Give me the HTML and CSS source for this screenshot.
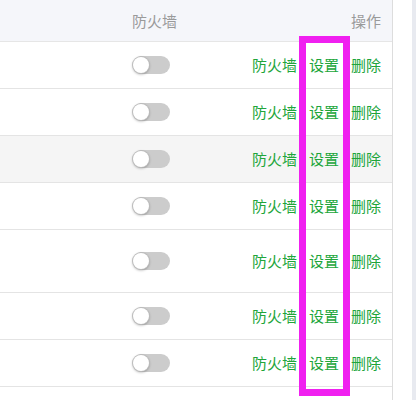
FILE: index.html
```html
<!DOCTYPE html>
<html lang="zh-CN">
<head>
    <meta charset="UTF-8">
    <meta name="viewport" content="width=device-width, initial-scale=1.0">
    <title>站点列表</title>
    <link rel="stylesheet" href="styles.css">
</head>
<body>
    <div class="page">
        <div class="table-box">
            <table class="site-table">
                <thead>
                    <tr>
                        <th class="col-name"></th>
                        <th class="col-fw">防火墙</th>
                        <th class="col-op">操作</th>
                    </tr>
                </thead>
                <tbody>
                    <tr>
                        <td class="col-name"></td>
                        <td class="col-fw"><span class="switch"><span class="knob"></span></span></td>
                        <td class="col-op"><div class="ops"><a class="op">防火墙</a><a class="op">设置</a><a class="op">删除</a></div></td>
                    </tr>
                    <tr>
                        <td class="col-name"></td>
                        <td class="col-fw"><span class="switch"><span class="knob"></span></span></td>
                        <td class="col-op"><div class="ops"><a class="op">防火墙</a><a class="op">设置</a><a class="op">删除</a></div></td>
                    </tr>
                    <tr class="hover">
                        <td class="col-name"></td>
                        <td class="col-fw"><span class="switch"><span class="knob"></span></span></td>
                        <td class="col-op"><div class="ops"><a class="op">防火墙</a><a class="op">设置</a><a class="op">删除</a></div></td>
                    </tr>
                    <tr>
                        <td class="col-name"></td>
                        <td class="col-fw"><span class="switch"><span class="knob"></span></span></td>
                        <td class="col-op"><div class="ops"><a class="op">防火墙</a><a class="op">设置</a><a class="op">删除</a></div></td>
                    </tr>
                    <tr class="tall">
                        <td class="col-name"></td>
                        <td class="col-fw"><span class="switch"><span class="knob"></span></span></td>
                        <td class="col-op"><div class="ops"><a class="op">防火墙</a><a class="op">设置</a><a class="op">删除</a></div></td>
                    </tr>
                    <tr>
                        <td class="col-name"></td>
                        <td class="col-fw"><span class="switch"><span class="knob"></span></span></td>
                        <td class="col-op"><div class="ops"><a class="op">防火墙</a><a class="op">设置</a><a class="op">删除</a></div></td>
                    </tr>
                    <tr>
                        <td class="col-name"></td>
                        <td class="col-fw"><span class="switch"><span class="knob"></span></span></td>
                        <td class="col-op"><div class="ops"><a class="op">防火墙</a><a class="op">设置</a><a class="op">删除</a></div></td>
                    </tr>
                    <tr>
                        <td class="col-name"></td>
                        <td class="col-fw"><span class="switch"><span class="knob"></span></span></td>
                        <td class="col-op"></td>
                    </tr>
                </tbody>
            </table>
            <div class="mark"></div>
        </div>
        <div class="gutter"></div>
        <div class="track"></div>
    </div>
</body>
</html>
```

FILE: styles.css
```css
* {
    margin: 0;
    padding: 0;
    box-sizing: border-box;
}
body {
    font-family: "Liberation Sans", "Noto Sans CJK SC", sans-serif;
    font-size: 15px;
    background: #fff;
    overflow: hidden;
}
.page {
    display: flex;
    height: 400px;
}
.table-box {
    position: relative;
    width: 393px;
    border-right: 1px solid #ddd;
    overflow: hidden;
}
.gutter {
    width: 19px;
    background: #fff;
}
.track {
    width: 4px;
    background: #e8eaf0;
}
.site-table {
    width: 392px;
    border-collapse: collapse;
    table-layout: fixed;
}
.site-table th {
    height: 41px;
    background: #f5f6fa;
    color: #9a9a9a;
    font-weight: normal;
    text-align: left;
    border-bottom: 1px solid #e6e6e6;
}
.site-table td {
    height: 47px;
    border-bottom: 1px solid #e4e4e4;
}
.site-table tr.tall td {
    height: 63px;
}
.site-table tr.hover td {
    background: #f5f5f5;
}
.col-name {
    width: 132px;
}
.col-fw {
    width: 110px;
}
.site-table .col-op {
    text-align: right;
    padding-right: 11px;
}
.ops {
    display: flex;
    justify-content: flex-end;
    gap: 12px;
}
.op {
    color: #20a53a;
    cursor: pointer;
}
.switch {
    position: relative;
    display: block;
    width: 37px;
    height: 18px;
    margin-left: 1px;
    border-radius: 9px;
    background: #ccc;
}
.knob {
    position: absolute;
    left: 0;
    top: 1px;
    width: 16px;
    height: 16px;
    border-radius: 50%;
    background: #fff;
    box-shadow: 0 0 0 1px #bbb, 0 1px 3px rgba(0, 0, 0, 0.4);
}
.mark {
    position: absolute;
    left: 299px;
    top: 36px;
    width: 51px;
    height: 360px;
    border: 7px solid #f020f0;
}
```
